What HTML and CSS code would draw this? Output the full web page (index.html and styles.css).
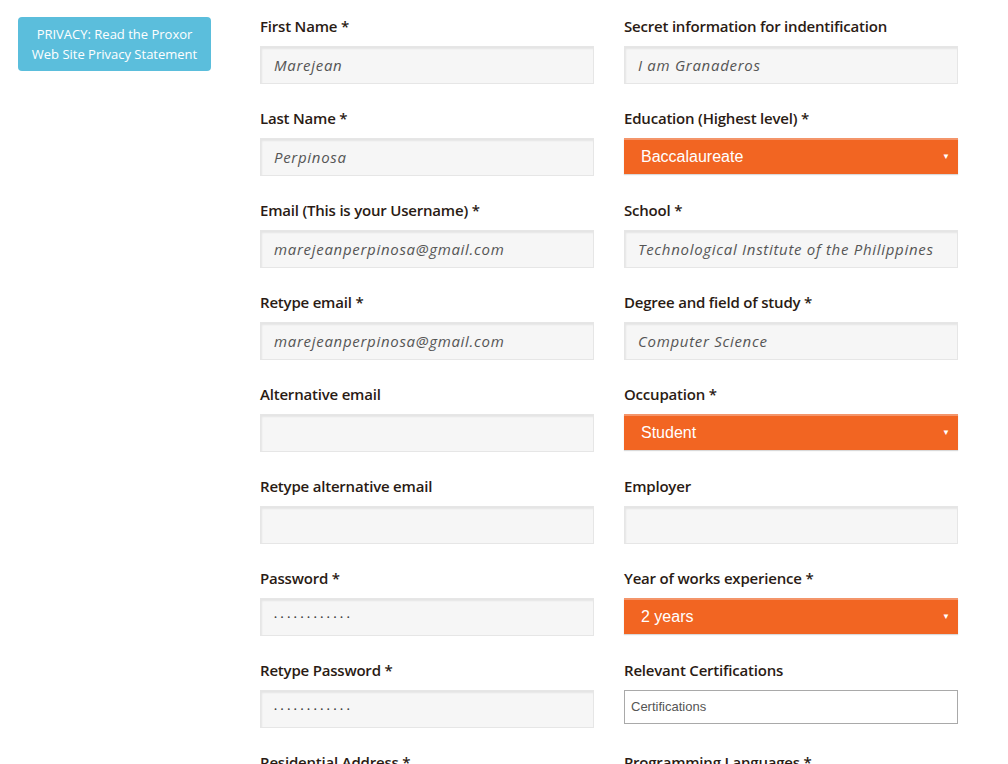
FILE: index.html
```html
<!DOCTYPE html>
<html>
<head>
<meta charset="utf-8">
<link rel="stylesheet" href="styles.css">
</head>
<body>
<div class="page">
  <aside class="side">
    <a class="privacy">PRIVACY: Read the Proxor<br>Web Site Privacy Statement</a>
  </aside>
  <form class="form">
    <div class="field"><label>First Name *</label><div class="inp">Marejean</div></div>
    <div class="field"><label>Secret information for indentification</label><div class="inp">I am Granaderos</div></div>

    <div class="field"><label>Last Name *</label><div class="inp">Perpinosa</div></div>
    <div class="field"><label>Education (Highest level) *</label><div class="sel">Baccalaureate<span class="arrow">▼</span></div></div>

    <div class="field"><label>Email (This is your Username) *</label><div class="inp">marejeanperpinosa@gmail.com</div></div>
    <div class="field"><label>School *</label><div class="inp">Technological Institute of the Philippines</div></div>

    <div class="field"><label>Retype email *</label><div class="inp">marejeanperpinosa@gmail.com</div></div>
    <div class="field"><label>Degree and field of study *</label><div class="inp">Computer Science</div></div>

    <div class="field"><label>Alternative email</label><div class="inp"></div></div>
    <div class="field"><label>Occupation *</label><div class="sel">Student<span class="arrow">▼</span></div></div>

    <div class="field"><label>Retype alternative email</label><div class="inp"></div></div>
    <div class="field"><label>Employer</label><div class="inp"></div></div>

    <div class="field"><label>Password *</label><div class="inp pw">••••••••••••</div></div>
    <div class="field"><label>Year of works experience *</label><div class="sel">2 years<span class="arrow">▼</span></div></div>

    <div class="field"><label>Retype Password *</label><div class="inp pw">••••••••••••</div></div>
    <div class="field"><label>Relevant Certifications</label><div class="plain">Certifications</div></div>

    <div class="field"><label>Residential Address *</label><div class="inp"></div></div>
    <div class="field"><label>Programming Languages *</label><div class="inp"></div></div>
  </form>
</div>
</body>
</html>
```

FILE: styles.css
```css
html, body {
  margin: 0;
  padding: 0;
  background: #ffffff;
  overflow: hidden;
}
body {
  font-family: "Open Sans", "Noto Sans", sans-serif;
}
.page {
  display: flex;
  align-items: flex-start;
}
.side {
  width: 260px;
  flex: none;
  padding: 17px 0 0 18px;
  box-sizing: border-box;
}
.privacy {
  display: block;
  width: 193px;
  height: 54px;
  box-sizing: border-box;
  padding-top: 7px;
  background: #5bbedc;
  border-radius: 4px;
  color: #ffffff;
  font-size: 13px;
  line-height: 20px;
  text-align: center;
  font-weight: 500;
  letter-spacing: 0px;
}
.form {
  display: grid;
  grid-template-columns: 334px 334px;
  column-gap: 30px;
  row-gap: 24px;
  padding-top: 16px;
  margin: 0;
}
.field {
  display: flex;
  flex-direction: column;
}
label {
  display: block;
  font-size: 15px;
  line-height: 20px;
  height: 20px;
  margin-bottom: 10px;
  font-weight: 600;
  color: #2a1b14;
  white-space: nowrap;
  letter-spacing: -0.2px;
}
.inp {
  height: 38px;
  box-sizing: border-box;
  background: #f6f6f6;
  border: 1px solid #e6e6e6;
  box-shadow: inset 1px 2px 2px rgba(0,0,0,0.07);
  padding-left: 13px;
  font-style: italic;
  font-size: 15px;
  line-height: 36px;
  color: #555555;
  letter-spacing: 0.7px;
  white-space: nowrap;
  overflow: hidden;
}
.inp.pw {
  font-style: normal;
  font-size: 8px;
  letter-spacing: 3.6px;
  color: #444;
}
.sel {
  position: relative;
  height: 36px;
  box-sizing: border-box;
  background: #f26522;
  border-top: 2px solid #f4956a;
  box-shadow: 0 1px 1px rgba(0,0,0,0.15);
  padding-left: 17px;
  font-family: "Liberation Sans", Arial, sans-serif;
  font-size: 16px;
  line-height: 33px;
  color: #ffffff;
}
.arrow {
  position: absolute;
  right: 8px;
  top: 0;
  font-size: 8px;
  line-height: 34px;
}
.plain {
  height: 34px;
  box-sizing: border-box;
  background: #ffffff;
  border: 1px solid #a9a9a9;
  padding-left: 6px;
  font-family: "Liberation Sans", Arial, sans-serif;
  font-size: 13px;
  line-height: 32px;
  color: #555555;
}
```
